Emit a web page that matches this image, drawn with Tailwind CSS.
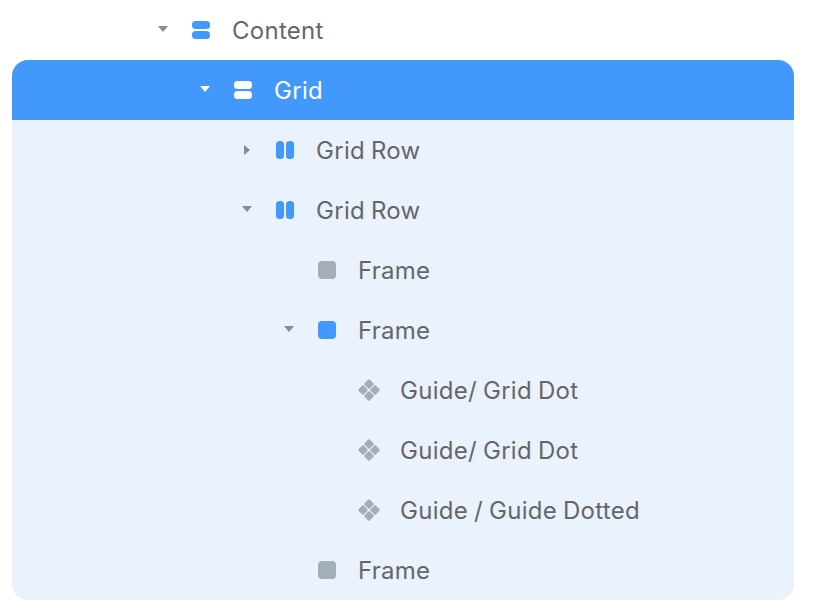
<!DOCTYPE html>
<html lang="en">

<head>
    <meta charset="UTF-8">
    <meta name="viewport" content="width=device-width, initial-scale=1.0">
    <title>Layers</title>
    <script src="https://cdn.jsdelivr.net/npm/@tailwindcss/browser@4"></script>
</head>

<body class="bg-white font-['Inter',sans-serif] text-[24px] tracking-[0.28px] [word-spacing:-1px] text-[#666666] overflow-hidden">
    <!-- Content -->
    <div class="flex items-center h-[60px] pl-[153px]">
        <div class="w-[20px] flex justify-center mr-[19px]">
            <svg width="10" height="6" viewBox="0 0 10 6" class="-mt-[2px]"><path d="M0 0H10L5 6Z" fill="#8c8c8c"/></svg>
        </div>
        <svg width="18" height="18" viewBox="0 0 18 18" class="mr-[22px]"><rect width="18" height="8" rx="3.5" fill="#4399fb"/><rect y="10" width="18" height="8" rx="3.5" fill="#4399fb"/></svg>
        <span class="pt-[2px]">Content</span>
    </div>

    <div class="mx-[12px] w-[782px] h-[540px] rounded-[16px] bg-[#eaf2fe] overflow-hidden">
        <!-- Grid (selected) -->
        <div class="flex items-center h-[60px] pl-[183px] bg-[#4399fb] text-white">
            <div class="w-[20px] flex justify-center mr-[19px]">
                <svg width="10" height="6" viewBox="0 0 10 6" class="-mt-[2px]"><path d="M0 0H10L5 6Z" fill="#ffffff"/></svg>
            </div>
            <svg width="18" height="18" viewBox="0 0 18 18" class="mr-[22px]"><rect width="18" height="8" rx="3.5" fill="#ffffff"/><rect y="10" width="18" height="8" rx="3.5" fill="#ffffff"/></svg>
            <span class="pt-[2px]">Grid</span>
        </div>

        <!-- Grid Row collapsed -->
        <div class="flex items-center h-[60px] pl-[225px]">
            <div class="w-[20px] flex justify-center mr-[19px]">
                <svg width="6" height="10" viewBox="0 0 6 10" class="-ml-[1px]"><path d="M0 0V10L6 5Z" fill="#8c8c8c"/></svg>
            </div>
            <svg width="18" height="18" viewBox="0 0 18 18" class="mr-[22px]"><rect width="8" height="18" rx="3.5" fill="#4399fb"/><rect x="10" width="8" height="18" rx="3.5" fill="#4399fb"/></svg>
            <span class="pt-[2px]">Grid Row</span>
        </div>

        <!-- Grid Row open -->
        <div class="flex items-center h-[60px] pl-[225px]">
            <div class="w-[20px] flex justify-center mr-[19px]">
                <svg width="10" height="6" viewBox="0 0 10 6" class="-mt-[2px]"><path d="M0 0H10L5 6Z" fill="#8c8c8c"/></svg>
            </div>
            <svg width="18" height="18" viewBox="0 0 18 18" class="mr-[22px]"><rect width="8" height="18" rx="3.5" fill="#4399fb"/><rect x="10" width="8" height="18" rx="3.5" fill="#4399fb"/></svg>
            <span class="pt-[2px]">Grid Row</span>
        </div>

        <!-- Frame -->
        <div class="flex items-center h-[60px] pl-[306px]">
            <div class="w-[18px] h-[18px] rounded-[4px] bg-[#a4aeb9] mr-[22px]"></div>
            <span class="pt-[2px]">Frame</span>
        </div>

        <!-- Frame open -->
        <div class="flex items-center h-[60px] pl-[267px]">
            <div class="w-[20px] flex justify-center mr-[19px]">
                <svg width="10" height="6" viewBox="0 0 10 6" class="-mt-[2px]"><path d="M0 0H10L5 6Z" fill="#8c8c8c"/></svg>
            </div>
            <div class="w-[18px] h-[18px] rounded-[4px] bg-[#4399fb] mr-[22px]"></div>
            <span class="pt-[2px]">Frame</span>
        </div>

        <!-- Guides -->
        <div class="flex items-center h-[60px] pl-[346px]">
            <svg width="22" height="22" viewBox="0 0 22 22" class="mr-[20px]" fill="#a4aeb9"><rect x="7.3" y="1.3" width="7.4" height="7.4" rx="1.2" transform="rotate(45 11 5)"/><rect x="1.3" y="7.3" width="7.4" height="7.4" rx="1.2" transform="rotate(45 5 11)"/><rect x="13.3" y="7.3" width="7.4" height="7.4" rx="1.2" transform="rotate(45 17 11)"/><rect x="7.3" y="13.3" width="7.4" height="7.4" rx="1.2" transform="rotate(45 11 17)"/></svg>
            <span class="pt-[2px]">Guide/ Grid Dot</span>
        </div>
        <div class="flex items-center h-[60px] pl-[346px]">
            <svg width="22" height="22" viewBox="0 0 22 22" class="mr-[20px]" fill="#a4aeb9"><rect x="7.3" y="1.3" width="7.4" height="7.4" rx="1.2" transform="rotate(45 11 5)"/><rect x="1.3" y="7.3" width="7.4" height="7.4" rx="1.2" transform="rotate(45 5 11)"/><rect x="13.3" y="7.3" width="7.4" height="7.4" rx="1.2" transform="rotate(45 17 11)"/><rect x="7.3" y="13.3" width="7.4" height="7.4" rx="1.2" transform="rotate(45 11 17)"/></svg>
            <span class="pt-[2px]">Guide/ Grid Dot</span>
        </div>
        <div class="flex items-center h-[60px] pl-[346px]">
            <svg width="22" height="22" viewBox="0 0 22 22" class="mr-[20px]" fill="#a4aeb9"><rect x="7.3" y="1.3" width="7.4" height="7.4" rx="1.2" transform="rotate(45 11 5)"/><rect x="1.3" y="7.3" width="7.4" height="7.4" rx="1.2" transform="rotate(45 5 11)"/><rect x="13.3" y="7.3" width="7.4" height="7.4" rx="1.2" transform="rotate(45 17 11)"/><rect x="7.3" y="13.3" width="7.4" height="7.4" rx="1.2" transform="rotate(45 11 17)"/></svg>
            <span class="pt-[2px]">Guide / Guide Dotted</span>
        </div>

        <!-- Frame -->
        <div class="flex items-center h-[60px] pl-[306px]">
            <div class="w-[18px] h-[18px] rounded-[4px] bg-[#a4aeb9] mr-[22px]"></div>
            <span class="pt-[2px]">Frame</span>
        </div>
    </div>
</body>

</html>
